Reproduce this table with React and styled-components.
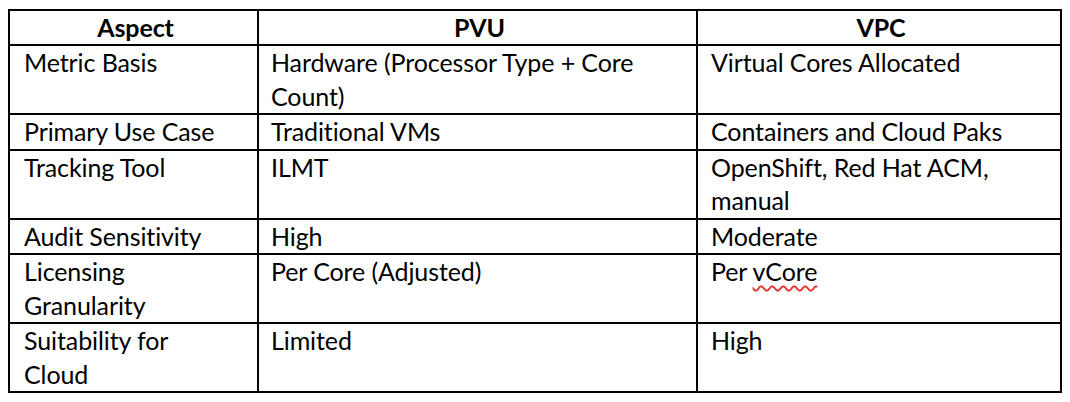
import React from 'react';
import styled, { createGlobalStyle } from 'styled-components';

const GlobalStyle = createGlobalStyle`
    html, body {
        margin: 0;
        padding: 0;
        background: #ffffff;
    }
    body {
        font-family: Lato, "Liberation Sans", sans-serif;
        color: #000000;
    }
`;

const Page = styled.div`
    width: 1070px;
    height: 402px;
    padding: 9px 0 0 8px;
    box-sizing: border-box;
`;

const Table = styled.div`
    display: grid;
    grid-template-columns: 247px 437px 362px;
    gap: 2px;
    padding: 2px;
    width: max-content;
    background: #000000;
`;

const Cell = styled.div`
    background: #ffffff;
    padding: 0 ${props => props.$right || 10}px 0 ${props => props.$indent || 14}px;
    font-size: 25px;
    line-height: 33.45px;
    font-weight: ${props => props.$head ? 700 : 400};
    text-align: ${props => props.$head ? 'center' : 'left'};
    letter-spacing: -0.1px;
`;

const Misspelled = styled.span`
    text-decoration: underline wavy #e0322e;
    text-decoration-thickness: 1.5px;
    text-underline-offset: 4px;
`;

const rows = [
    ['Metric Basis', 'Hardware (Processor Type + Core Count)', 'Virtual Cores Allocated'],
    ['Primary Use Case', 'Traditional VMs', 'Containers and Cloud Paks'],
    ['Tracking Tool', 'ILMT', 'OpenShift, Red Hat ACM, manual'],
    ['Audit Sensitivity', 'High', 'Moderate'],
    ['Licensing Granularity', 'Per Core (Adjusted)', <>Per <Misspelled>vCore</Misspelled></>],
    ['Suitability for Cloud', 'Limited', 'High'],
];

const App = () => {
    return (
        <Page>
            <GlobalStyle />
            <Table>
                <Cell $head>Aspect</Cell>
                <Cell $head>PVU</Cell>
                <Cell $head>VPC</Cell>
                {rows.map((row, i) => (
                    <React.Fragment key={i}>
                        <Cell $right={30}>{row[0]}</Cell>
                        <Cell $indent={12}>{row[1]}</Cell>
                        <Cell $indent={13}>{row[2]}</Cell>
                    </React.Fragment>
                ))}
            </Table>
        </Page>
    );
};

export default App;
